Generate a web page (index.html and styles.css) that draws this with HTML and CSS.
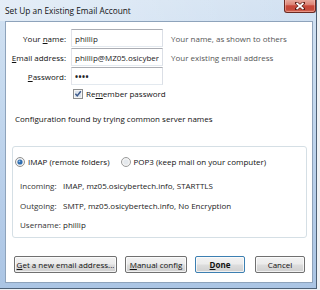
FILE: index.html
```html
<!DOCTYPE html>
<html>
<head>
<meta charset="utf-8">
<link rel="stylesheet" href="styles.css">
</head>
<body>
<div class="window">
  <div class="titlebar">
    <span class="title">Set Up an Existing Email Account</span>
    <div class="close">
      <svg width="10" height="8" viewBox="0 0 10 8"><path d="M1.5 1 L8.5 7 M8.5 1 L1.5 7" stroke="#5a1a12" stroke-width="3.2" stroke-linecap="square"/><path d="M1.5 1 L8.5 7 M8.5 1 L1.5 7" stroke="#fff" stroke-width="1.7"/></svg>
    </div>
  </div>
  <div class="client">
    <div class="form">
      <label class="lbl" for="f-name">Your <u>n</u>ame:</label>
      <input class="input" id="f-name" type="text" value="phillip">
      <span class="hint">Your name, as shown to others</span>
      <label class="lbl" for="f-email"><u>E</u>mail address:</label>
      <input class="input" id="f-email" type="text" value="phillip@MZ05.osicybertech.info">
      <span class="hint">Your existing email address</span>
      <label class="lbl" for="f-pw"><u>P</u>assword:</label>
      <input class="input pw" id="f-pw" type="password" value="phil">
      <span class="hint"></span>
    </div>
    <div class="remember">
      <svg class="check" width="10" height="10" viewBox="0 0 10 10"><rect x="0.5" y="0.5" width="9" height="9" fill="#f6f6f6" stroke="#8e8f8f"/><rect x="2" y="2" width="6" height="6" fill="#dde4ec"/><path d="M2.4 4.8 L4.2 6.9 L7.8 2.3" fill="none" stroke="#3d5a8c" stroke-width="1.5"/></svg>
      <span>Re<u>m</u>ember password</span>
    </div>
    <p class="found">Configuration found by trying common server names</p>
    <div class="group">
      <div class="radios">
        <span class="opt"><svg width="10" height="10" viewBox="0 0 10 10"><circle cx="5" cy="5" r="4.5" fill="#f3f3f3" stroke="#8e8f8f"/><circle cx="5" cy="5" r="2.6" fill="#2f6db0"/><circle cx="4.4" cy="4.3" r="0.9" fill="#9cc3ea"/></svg>IMAP (remote folders)</span>
        <span class="opt"><svg width="10" height="10" viewBox="0 0 10 10"><circle cx="5" cy="5" r="4.5" fill="#f3f3f3" stroke="#9a9b9b"/><circle cx="5" cy="5" r="2.6" fill="#e4e8ec"/></svg>POP3 (keep mail on your computer)</span>
      </div>
      <div class="info">
        <span class="k">Incoming:</span><span>IMAP, mz05.osicybertech.info, STARTTLS</span>
        <span class="k">Outgoing:</span><span>SMTP, mz05.osicybertech.info, No Encryption</span>
        <span class="k">Username:</span><span>phillip</span>
      </div>
    </div>
    <div class="buttons">
      <button class="btn b-new"><u>G</u>et a new email address...</button>
      <button class="btn b-manual"><u>M</u>anual config</button>
      <button class="btn b-done default"><u>D</u>one</button>
      <button class="btn b-cancel">Cancel</button>
    </div>
  </div>
</div>
</body>
</html>
```
FILE: styles.css
```css
* { box-sizing: border-box; }
html, body { margin: 0; padding: 0; }
body {
  width: 320px;
  height: 290px;
  overflow: hidden;
  background: #eef1f4;
  font-family: "Open Sans", "Noto Sans", sans-serif;
  font-size: 8px;
  color: #000;
}
.window {
  width: 317px;
  height: 289px;
  display: flex;
  flex-direction: column;
  background: linear-gradient(180deg, #d3e2f2 0%, #c6daef 30%, #b6cde9 70%, #abc5e4 100%);
  border-right: 1px solid #4e6176;
  border-bottom: 1px solid #4e6176;
}
.titlebar {
  height: 21px;
  display: flex;
  justify-content: space-between;
  align-items: flex-start;
  padding-left: 5px;
  background: linear-gradient(90deg, rgba(255,255,255,0.4) 0%, rgba(255,255,255,0.15) 60%, rgba(255,255,255,0) 100%);
}
.title {
  line-height: 21px;
  font-size: 8.3px;
  color: #111;
}
.close {
  width: 32px;
  height: 14px;
  margin-top: -1px;
  border: 1px solid #6a2a22;
  border-top: none;
  border-radius: 0 0 3px 3px;
  background: linear-gradient(180deg, #eab0a4 0%, #db8274 45%, #c8483a 52%, #c44a3a 80%, #d8705c 100%);
  display: flex;
  align-items: center;
  justify-content: center;
  box-shadow: inset 0 0 0 1px rgba(255,200,190,0.45);
}
.client {
  flex: 1;
  margin: 0 3px 5px 5px;
  background: #fff;
  border: 1px solid #8ea3bb;
  display: flex;
  flex-direction: column;
}
.form {
  display: grid;
  grid-template-columns: 60px 97px auto;
  grid-auto-rows: 18px;
  row-gap: 1px;
  padding-top: 7px;
  align-items: center;
}
.lbl {
  text-align: right;
  color: #111;
}
.input {
  margin: 0 0 0 5px;
  height: 18px;
  width: 92px;
  border: 1px solid #abadb3;
  border-color: #abadb3 #dbdfe6 #e3e9ef #e2e3ea;
  padding: 0 3px;
  font: inherit;
  color: #222;
  background: #fff;
  outline: none;
}
.input.pw { letter-spacing: 0.5px; font-weight: bold; }
.hint {
  margin-left: 8px;
  color: #555;
  white-space: nowrap;
}
.remember {
  margin-top: 2px;
  padding-left: 67px;
  height: 13px;
  display: flex;
  align-items: center;
  gap: 3px;
  color: #111;
}
.found {
  margin: 13px 0 0 9px;
  line-height: 12px;
  color: #111;
}
.group {
  margin: 21px 0 0 6px;
  width: 295px;
  height: 92px;
  border: 1px solid #d5dfe5;
  border-radius: 3px;
}
.radios {
  padding: 5px 0 0 2px;
  height: 24px;
  display: flex;
  align-items: center;
  gap: 11px;
  color: #111;
}
.opt {
  display: flex;
  align-items: center;
  gap: 3px;
}
.info {
  margin-top: 5px;
  padding-left: 7px;
  display: grid;
  grid-template-columns: 43px auto;
  grid-auto-rows: 19.5px;
  align-items: center;
  color: #222;
}
.info .k { color: #333; }
.buttons {
  margin-top: auto;
  margin-bottom: 9px;
  padding-left: 8px;
  display: flex;
}
.btn {
  height: 17px;
  padding: 0;
  font: inherit;
  color: #111;
  border: 1px solid #707070;
  border-radius: 2px;
  background: linear-gradient(180deg, #f2f2f2 0%, #ebebeb 48%, #dddddd 52%, #cfcfcf 100%);
  box-shadow: inset 0 0 0 1px rgba(255,255,255,0.7);
}
.b-new { width: 103px; }
.b-manual { width: 62px; margin-left: 8px; }
.b-done { width: 50px; margin-left: 8px; font-weight: bold; }
.b-cancel { width: 50px; margin-left: 10px; }
.btn.default { border-color: #3c7fb1; }
```
